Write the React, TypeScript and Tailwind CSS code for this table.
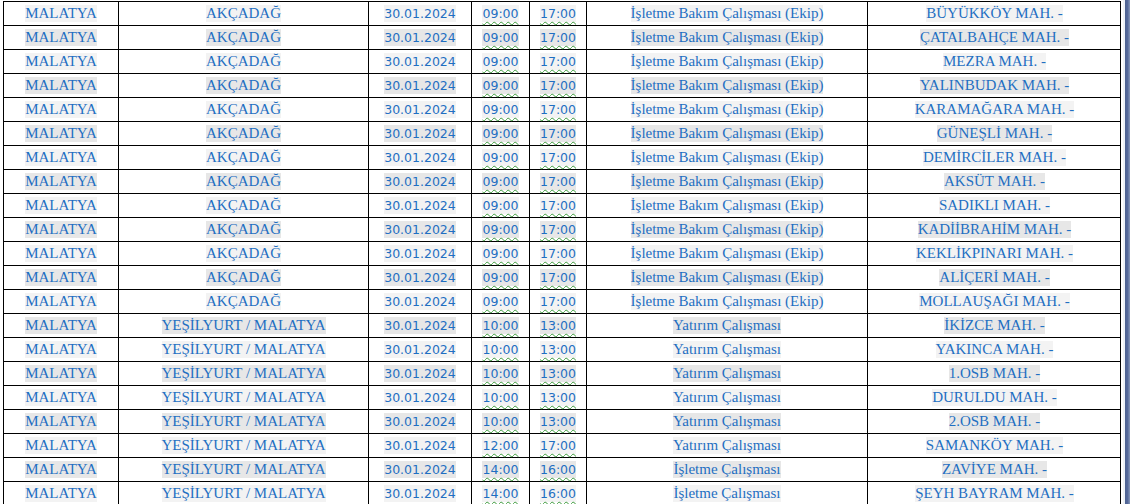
import React from 'react'

type Row = {
  start: string
  end: string
  district: string
  work: string
  place: string
}

const bakim = 'İşletme Bakım Çalışması (Ekip)'
const yatirim = 'Yatırım Çalışması'

const rows: Row[] = [
  { district: 'AKÇADAĞ', start: '09:00', end: '17:00', work: bakim, place: 'BÜYÜKKÖY MAH. -' },
  { district: 'AKÇADAĞ', start: '09:00', end: '17:00', work: bakim, place: 'ÇATALBAHÇE MAH. -' },
  { district: 'AKÇADAĞ', start: '09:00', end: '17:00', work: bakim, place: 'MEZRA MAH. -' },
  { district: 'AKÇADAĞ', start: '09:00', end: '17:00', work: bakim, place: 'YALINBUDAK MAH. -' },
  { district: 'AKÇADAĞ', start: '09:00', end: '17:00', work: bakim, place: 'KARAMAĞARA MAH. -' },
  { district: 'AKÇADAĞ', start: '09:00', end: '17:00', work: bakim, place: 'GÜNEŞLİ MAH. -' },
  { district: 'AKÇADAĞ', start: '09:00', end: '17:00', work: bakim, place: 'DEMİRCİLER MAH. -' },
  { district: 'AKÇADAĞ', start: '09:00', end: '17:00', work: bakim, place: 'AKSÜT MAH. -' },
  { district: 'AKÇADAĞ', start: '09:00', end: '17:00', work: bakim, place: 'SADIKLI MAH. -' },
  { district: 'AKÇADAĞ', start: '09:00', end: '17:00', work: bakim, place: 'KADİİBRAHİM MAH. -' },
  { district: 'AKÇADAĞ', start: '09:00', end: '17:00', work: bakim, place: 'KEKLİKPINARI MAH. -' },
  { district: 'AKÇADAĞ', start: '09:00', end: '17:00', work: bakim, place: 'ALİÇERİ MAH. -' },
  { district: 'AKÇADAĞ', start: '09:00', end: '17:00', work: bakim, place: 'MOLLAUŞAĞI MAH. -' },
  { district: 'YEŞİLYURT / MALATYA', start: '10:00', end: '13:00', work: yatirim, place: 'İKİZCE MAH. -' },
  { district: 'YEŞİLYURT / MALATYA', start: '10:00', end: '13:00', work: yatirim, place: 'YAKINCA MAH. -' },
  { district: 'YEŞİLYURT / MALATYA', start: '10:00', end: '13:00', work: yatirim, place: '1.OSB MAH. -' },
  { district: 'YEŞİLYURT / MALATYA', start: '10:00', end: '13:00', work: yatirim, place: 'DURULDU MAH. -' },
  { district: 'YEŞİLYURT / MALATYA', start: '10:00', end: '13:00', work: yatirim, place: '2.OSB MAH. -' },
  { district: 'YEŞİLYURT / MALATYA', start: '12:00', end: '17:00', work: yatirim, place: 'SAMANKÖY MAH. -' },
  { district: 'YEŞİLYURT / MALATYA', start: '14:00', end: '16:00', work: 'İşletme Çalışması', place: 'ZAVİYE MAH. -' },
  { district: 'YEŞİLYURT / MALATYA', start: '14:00', end: '16:00', work: 'İşletme Çalışması', place: 'ŞEYH BAYRAM MAH. -' },
]

const serif = "font-['Liberation_Serif','Times_New_Roman',serif] text-[15px]"
const sans = "font-['DejaVu_Sans','Verdana',sans-serif] text-[12.5px]"

function Cell({ children, last }: { children: React.ReactNode; last?: boolean }) {
  return (
    <div className={last ? 'flex items-center justify-center' : 'flex items-center justify-center border-r border-black'}>
      {children}
    </div>
  )
}

export default function App() {
  return (
    <div className="flex h-[504px] w-[1130px] overflow-hidden bg-white text-[#1f6fc2]">
      <div className="ml-[3px] mt-[1px] w-[1118px] border-l border-t border-black">
        {rows.map((r, i) => {
          const hl = i % 2 === 1 ? 'bg-[#e7e7e7]' : 'bg-[#f3f3f3]'
          const time = `${sans} ${hl} leading-[17px] underline decoration-wavy decoration-[#3a9a3a] decoration-1 underline-offset-[3px]`
          return (
            <div
              key={i}
              className="grid h-6 grid-cols-[115px_250px_103px_58px_57px_281px_253px] border-b border-r border-black"
            >
              <Cell>
                <span className={`${serif} ${hl} leading-[17px]`}>MALATYA</span>
              </Cell>
              <Cell>
                <span className={`${serif} ${hl} leading-[17px]`}>{r.district}</span>
              </Cell>
              <Cell>
                <span className={`${sans} ${hl} leading-[17px]`}>30.01.2024</span>
              </Cell>
              <Cell>
                <span className={time}>{r.start}</span>
              </Cell>
              <Cell>
                <span className={time}>{r.end}</span>
              </Cell>
              <Cell>
                <span className={`${serif} ${hl} leading-[17px]`}>{r.work}</span>
              </Cell>
              <Cell last>
                <span className={`${serif} ${hl} leading-[17px]`}>{r.place}</span>
              </Cell>
            </div>
          )
        })}
      </div>
      <div className="ml-[2px] w-[3px] bg-[#eef2f7]" />
      <div className="w-[6px] bg-gradient-to-r from-[#4d6290] via-[#55699a] to-[#8a9aba]" />
    </div>
  )
}
